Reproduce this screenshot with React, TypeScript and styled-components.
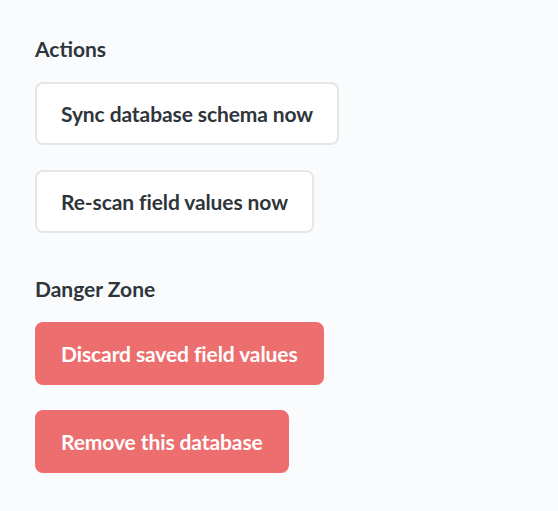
import React from "react";
import styled, { createGlobalStyle } from "styled-components";

const Global = createGlobalStyle`
  html, body { margin: 0; padding: 0; background: #F9FBFC; }
  body { font-family: Lato, "Noto Sans", sans-serif; color: #2E353B; }
`;

const Page = styled.div`
  padding: 36px 35px;
  display: flex;
  flex-direction: column;
  gap: 43px;
`;

const Section = styled.section`
  display: flex;
  flex-direction: column;
  align-items: flex-start;
`;

const Heading = styled.h4`
  margin: 0 0 20px;
  font-size: 21px;
  line-height: 26px;
  font-weight: 700;
  color: #2E353B;
`;

const ButtonList = styled.div`
  display: flex;
  flex-direction: column;
  align-items: flex-start;
  gap: 25px;
`;

const Button = styled.button<{ $danger?: boolean }>`
  box-sizing: border-box;
  height: 63px;
  padding: 0 24px;
  border-radius: 8px;
  border: 2px solid ${(p) => (p.$danger ? "#ED6E6E" : "#E4E6E8")};
  background: ${(p) => (p.$danger ? "#ED6E6E" : "#FFFFFF")};
  color: ${(p) => (p.$danger ? "#FFFFFF" : "#2E353B")};
  font-family: Lato, "Noto Sans", sans-serif;
  font-size: 21px;
  font-weight: 700;
  letter-spacing: -0.1px;
  cursor: pointer;
`;

export default function App() {
  return (
    <>
      <Global />
      <Page>
        <Section>
          <Heading>Actions</Heading>
          <ButtonList>
            <Button>Sync database schema now</Button>
            <Button>Re-scan field values now</Button>
          </ButtonList>
        </Section>
        <Section>
          <Heading>Danger Zone</Heading>
          <ButtonList>
            <Button $danger>Discard saved field values</Button>
            <Button $danger>Remove this database</Button>
          </ButtonList>
        </Section>
      </Page>
    </>
  );
}
